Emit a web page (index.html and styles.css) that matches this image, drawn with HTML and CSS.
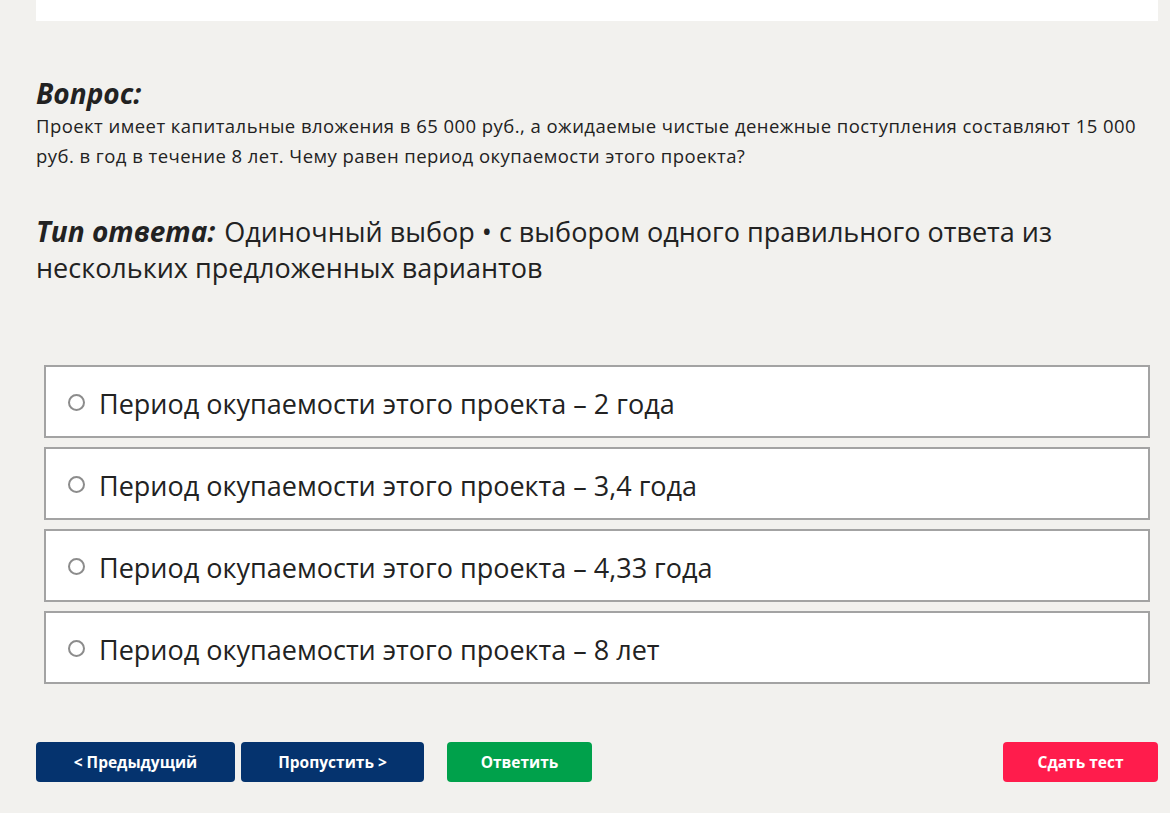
FILE: index.html
```html
<!DOCTYPE html>
<html lang="ru">
<head>
    <meta charset="UTF-8">
    <meta name="viewport" content="width=device-width, initial-scale=1.0">
    <title>Тест</title>
    <link rel="stylesheet" href="styles.css">
</head>
<body>
    <div class="page">
        <div class="top-panel"></div>

        <div class="question">
            <h2 class="label">Вопрос:</h2>
            <p class="question-text">Проект имеет капитальные вложения в 65 000 руб., а ожидаемые чистые денежные поступления составляют 15 000 руб. в год в течение 8 лет. Чему равен период окупаемости этого проекта?</p>
        </div>

        <p class="answer-type"><span class="label type-label">Тип ответа:</span>Одиночный выбор • с выбором одного правильного ответа из нескольких предложенных вариантов</p>

        <form class="options">
            <label class="option"><span class="radio"></span>Период окупаемости этого проекта – 2 года</label>
            <label class="option"><span class="radio"></span>Период окупаемости этого проекта – 3,4 года</label>
            <label class="option"><span class="radio"></span>Период окупаемости этого проекта – 4,33 года</label>
            <label class="option"><span class="radio"></span>Период окупаемости этого проекта – 8 лет</label>
        </form>

        <div class="actions">
            <button class="btn btn-nav btn-prev">&lt; Предыдущий</button>
            <button class="btn btn-nav btn-skip">Пропустить &gt;</button>
            <button class="btn btn-answer">Ответить</button>
            <button class="btn btn-finish">Сдать тест</button>
        </div>
    </div>
</body>
</html>
```

FILE: styles.css
```css
body {
    font-family: "Open Sans", "Noto Sans", sans-serif;
    background-color: #f2f1ee;
    color: #222;
    margin: 0;
}

.page {
    padding: 0 12px 0 36px;
}

.top-panel {
    background-color: #fff;
    height: 21px;
}

.question {
    margin-top: 54px;
}

.label {
    font-size: 28px;
    font-weight: bold;
    font-style: italic;
    margin: 0;
    line-height: 36px;
}

.type-label {
    display: inline-block;
    padding-right: 9px;
}

.question-text {
    font-size: 18.5px;
    letter-spacing: 0.45px;
    line-height: 30px;
    margin: 0;
}

.answer-type {
    font-size: 27px;
    line-height: 36px;
    margin: 42px 0 0;
}

.options {
    margin: 79px 8px 0 8px;
    display: flex;
    flex-direction: column;
    gap: 9px;
}

.option {
    display: flex;
    align-items: center;
    height: 73px;
    box-sizing: border-box;
    background-color: #fff;
    border: 2px solid #a3a3a3;
    padding: 3px 0 0 22px;
    font-size: 27px;
    cursor: pointer;
}

.radio {
    width: 17px;
    height: 17px;
    box-sizing: border-box;
    border: 2px solid #8c8c8c;
    border-radius: 50%;
    margin: -2px 14px 0 0;
}

.actions {
    display: flex;
    margin-top: 58px;
}

.btn {
    height: 40px;
    border: none;
    border-radius: 4px;
    color: #fff;
    font-family: "Open Sans", "Noto Sans", sans-serif;
    font-size: 15.5px;
    font-weight: bold;
    cursor: pointer;
}

.btn-nav {
    background-color: #05336e;
}

.btn-prev {
    width: 199px;
}

.btn-skip {
    width: 183px;
    margin-left: 6px;
}

.btn-answer {
    width: 145px;
    margin-left: 23px;
    background-color: #00a14b;
}

.btn-finish {
    width: 155px;
    margin-left: auto;
    background-color: #ff1c4c;
}
```
